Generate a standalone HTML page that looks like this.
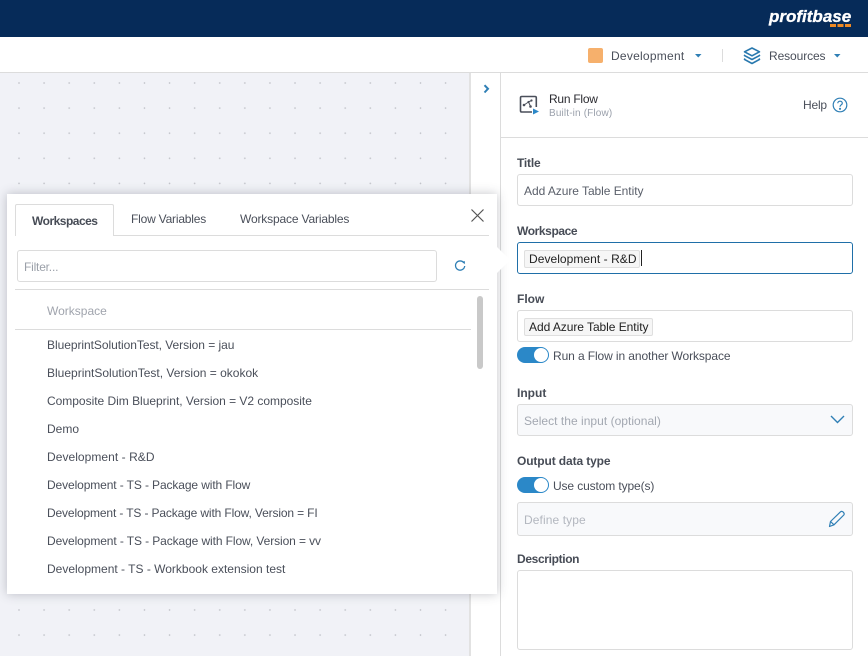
<!DOCTYPE html>
<html><head><meta charset="utf-8"><style>
html,body{margin:0;padding:0;width:868px;height:656px;overflow:hidden;background:#fff}
body{position:relative;font-family:"Liberation Sans",sans-serif;font-size:12px;color:#4a4f5a}
.a{position:absolute;white-space:nowrap}
.t{position:absolute;white-space:nowrap;line-height:16px}
.l{position:absolute;white-space:nowrap;line-height:16px;left:517px;color:#474c56;font-weight:bold;font-size:12px}
.box{position:absolute;left:517px;width:334px;border:1px solid #dcdcdc;border-radius:3px;box-sizing:content-box;background:#fff}
.tog{position:absolute;left:517px;width:32px;height:16px;border-radius:8px;background:#2b88c8}
.tog i{position:absolute;right:1px;top:1px;width:14px;height:14px;border-radius:7px;background:#fff}
.chip{position:absolute;left:524px;height:16px;background:#f6f6f6;border:1px solid #dfdfdf;border-radius:2px;line-height:16px;color:#222;padding:0 0 0 4px;box-sizing:content-box}
.row{position:absolute;left:47px;line-height:16px;white-space:nowrap;color:#4a4f5a}
</style></head><body>
<div class="a" style="left:0;top:0;width:868px;height:37px;background:#062b59"></div>
<div class="a" style="left:769px;top:7px;color:#fff;font:italic bold 17px/20px 'Liberation Sans',sans-serif;letter-spacing:0;-webkit-text-stroke:.3px #fff">profitbase</div>
<svg class="a" style="left:830px;top:24px" width="21" height="4"><rect x="0" y="0" width="6" height="3" fill="#f08a24"/><rect x="7.500" y="0" width="6" height="3" fill="#f08a24"/><rect x="15" y="0" width="6" height="3" fill="#f08a24"/></svg>

<div class="a" style="left:588px;top:48px;width:15px;height:15px;border-radius:2px;background:#f6b06c"></div>
<div class="t" style="left:611px;top:48px;color:#4a4f5a;letter-spacing:.25px">Development</div>
<svg class="a" style="left:695px;top:54px" width="7" height="4"><path d="M0 0H6.500L3.250 3.500Z" fill="#2f7fb5"/></svg>
<div class="a" style="left:722px;top:49px;width:1px;height:13px;background:#dcdcdc"></div>
<svg class="a" style="left:743px;top:47px" width="18" height="18" viewBox="0 0 18 18" fill="none" stroke="#2878ae" stroke-width="1.600" stroke-linejoin="round"><path d="M9 1L16.500 4.800L9 8.800L1.500 4.800Z"/><path d="M2 7.800L1.500 8.600L9 12.500L16.500 8.600L16 7.800"/><path d="M2 11.500L1.500 12.400L9 16.500L16.500 12.400L16 11.500"/></svg>
<div class="t" style="left:769px;top:48px;color:#4a4f5a;letter-spacing:-.1px">Resources</div>
<svg class="a" style="left:834px;top:54px" width="7" height="4"><path d="M0 0H6.500L3.250 3.500Z" fill="#2f7fb5"/></svg>
<div class="a" style="left:0;top:72px;width:868px;height:1px;background:#dcdcdc"></div>

<div class="a" style="left:0;top:73px;width:469px;height:583px;background-color:#f1f2f7;background-image:radial-gradient(circle at 1px 1px,#bfc1c7 0.6px,transparent 1px);background-size:25.1px 25.1px;background-position:18px 9px"></div>
<div class="a" style="left:469px;top:73px;width:2px;height:583px;background:#e2e2e2"></div>
<div class="a" style="left:500px;top:73px;width:1px;height:583px;background:#dcdcdc"></div>
<svg class="a" style="left:483px;top:84px" width="7" height="10" viewBox="0 0 7 10" fill="none" stroke="#2f7fb5" stroke-width="2"><path d="M1.500 1.200L5 4.800L1.500 8.500"/></svg>

<svg class="a" style="left:519px;top:95px" width="21" height="21" viewBox="0 0 21 21" fill="none"><path d="M13 17H2.800Q1.500 17 1.500 15.700V2.800Q1.500 1.500 2.800 1.500H16Q17.300 1.500 17.300 2.800V12" stroke="#4a4f5a" stroke-width="1.600"/><path d="M5 10L9.500 7M9.500 7L12.500 5.500M9.800 7.500L11.500 11.500" stroke="#4a4f5a"/><circle cx="5" cy="10" r="1.300" fill="#4a4f5a"/><circle cx="9.500" cy="7" r="1.100" fill="#4a4f5a"/><circle cx="12.500" cy="5.500" r="1.100" fill="#4a4f5a"/><circle cx="11.500" cy="11.500" r="1.300" fill="#4a4f5a"/><path d="M14 13.500L20 16.500L14 19.500Z" fill="#2b88c8"/></svg>
<div class="t" style="left:549px;top:91px;color:#2a2a30;letter-spacing:-.25px">Run Flow</div>
<div class="t" style="left:549px;top:106px;color:#9aa0ab;font-size:10px;letter-spacing:.15px">Built-in (Flow)</div>
<div class="t" style="left:803px;top:97px;color:#4a4f5a;letter-spacing:-.2px">Help</div>
<svg class="a" style="left:832px;top:97px" width="16" height="16" viewBox="0 0 16 16" fill="none" stroke="#2f7fb5" stroke-width="1.200"><circle cx="8" cy="8" r="6.800"/><path d="M5.800 6.200C5.800 3.500 10.300 3.500 10.300 6.200C10.300 7.900 8 7.800 8 9.800"/><circle cx="8" cy="11.800" r=".5"/></svg>
<div class="a" style="left:501px;top:137px;width:367px;height:1px;background:#dcdcdc"></div>

<div class="l" style="top:155px;letter-spacing:-.2px">Title</div>
<div class="box" style="top:174px;height:30px"></div>
<div class="t" style="left:524px;top:183px;color:#5a5f6a;letter-spacing:-.05px">Add Azure Table Entity</div>

<div class="l" style="top:223px;letter-spacing:-.4px">Workspace</div>
<div class="box" style="top:242px;height:30px;border-color:#1f6fa8"></div>
<div class="chip" style="top:250px;width:110px;letter-spacing:.05px">Development - R&amp;D</div>
<div class="a" style="left:641px;top:250px;width:1px;height:16px;background:#222"></div>

<div class="l" style="top:291px">Flow</div>
<div class="box" style="top:310px;height:30px"></div>
<div class="chip" style="top:318px;width:123px;letter-spacing:-.05px">Add Azure Table Entity</div>

<div class="tog" style="top:347px"><i></i></div>
<div class="t" style="left:553px;top:348px;color:#4a4f5a;letter-spacing:-.1px">Run a Flow in another Workspace</div>

<div class="l" style="top:385px">Input</div>
<div class="box" style="top:404px;height:30px;background:#f8f9fb"></div>
<div class="t" style="left:524px;top:413px;color:#a3a8b1;letter-spacing:.03px">Select the input (optional)</div>
<svg class="a" style="left:830px;top:415px" width="15" height="9" viewBox="0 0 15 9" fill="none" stroke="#2f7fb5" stroke-width="1.400"><path d="M1 1L7.500 7.500L14 1"/></svg>

<div class="l" style="top:453px;letter-spacing:-.12px">Output data type</div>
<div class="tog" style="top:477px"><i></i></div>
<div class="t" style="left:553px;top:478px;color:#4a4f5a;letter-spacing:-.12px">Use custom type(s)</div>
<div class="box" style="top:502px;height:32px;background:#f8f9fb"></div>
<div class="t" style="left:524px;top:512px;color:#b3b7bf;letter-spacing:.1px">Define type</div>
<svg class="a" style="left:828px;top:510px" width="18" height="18" viewBox="0 0 18 18" fill="none" stroke="#2f7fb5" stroke-width="1.200" stroke-linejoin="round"><path d="M1.500 16.500L2.500 11.500L12.500 1.800Q13.800 .8 15.300 2.200Q16.800 3.800 15.800 5L6 14.800Z"/><path d="M2.500 11.500L6 14.800"/></svg>

<div class="l" style="top:551px;letter-spacing:-.35px">Description</div>
<div class="box" style="top:570px;height:78px"></div>

<!-- popup -->
<div class="a" style="left:7px;top:194px;width:490px;height:400px;background:#fff;box-shadow:0 0 10px rgba(60,64,80,.3)"></div>
<svg class="a" style="left:496px;top:244px;overflow:visible" width="16" height="30"><path d="M1 3L14 16L1 29Z" fill="#fff"/></svg>
<div class="a" style="left:15px;top:235px;width:474px;height:1px;background:#dcdcdc"></div>
<div class="a" style="left:15px;top:204px;width:99px;height:32px;box-sizing:border-box;background:#fff;border:1px solid #dcdcdc;border-bottom:0;border-radius:2px 2px 0 0"></div>
<div class="t" style="left:32px;top:213px;color:#474c56;font-weight:bold;letter-spacing:-.5px">Workspaces</div>
<div class="t" style="left:131px;top:211px;color:#4a4f5a;letter-spacing:-.2px">Flow Variables</div>
<div class="t" style="left:240px;top:211px;color:#4a4f5a;letter-spacing:-.16px">Workspace Variables</div>
<svg class="a" style="left:471px;top:209px" width="13" height="13" viewBox="0 0 13 13" stroke="#555" stroke-width="1.200"><path d="M.5 .5L12.500 12.500M12.500 .5L.5 12.500"/></svg>
<div class="a" style="left:17px;top:250px;width:420px;height:32px;box-sizing:border-box;border:1px solid #dcdcdc;border-radius:3px"></div>
<div class="t" style="left:24px;top:259px;color:#9ba0a9;letter-spacing:-.2px">Filter...</div>
<svg class="a" style="left:454px;top:260px" width="12" height="12" viewBox="0 0 12 12" fill="none" stroke="#2f7fb5" stroke-width="1.300"><path d="M9.800 2.800A4.600 4.600 0 1 0 10.700 6"/><path d="M8 1.500L11 1.200L10.700 4.300Z" fill="#2f7fb5" stroke="none"/></svg>
<div class="a" style="left:15px;top:289px;width:474px;height:1px;background:#dcdcdc"></div>
<div class="t" style="left:47px;top:303px;color:#a0a4ad">Workspace</div>
<div class="a" style="left:15px;top:329px;width:456px;height:1px;background:#dcdcdc"></div>
<div class="a" style="left:477px;top:296px;width:6px;height:73px;border-radius:3px;background:#c9c9c9"></div>
<div class="row" style="top:337px;letter-spacing:-.05px">BlueprintSolutionTest, Version = jau</div>
<div class="row" style="top:365px">BlueprintSolutionTest, Version = okokok</div>
<div class="row" style="top:393px;letter-spacing:-.02px">Composite Dim Blueprint, Version = V2 composite</div>
<div class="row" style="top:421px">Demo</div>
<div class="row" style="top:449px;letter-spacing:.05px">Development - R&amp;D</div>
<div class="row" style="top:477px;letter-spacing:-.11px">Development - TS - Package with Flow</div>
<div class="row" style="top:505px;letter-spacing:-.14px">Development - TS - Package with Flow, Version = FI</div>
<div class="row" style="top:533px;letter-spacing:-.1px">Development - TS - Package with Flow, Version = vv</div>
<div class="row" style="top:561px">Development - TS - Workbook extension test</div>
</body></html>
